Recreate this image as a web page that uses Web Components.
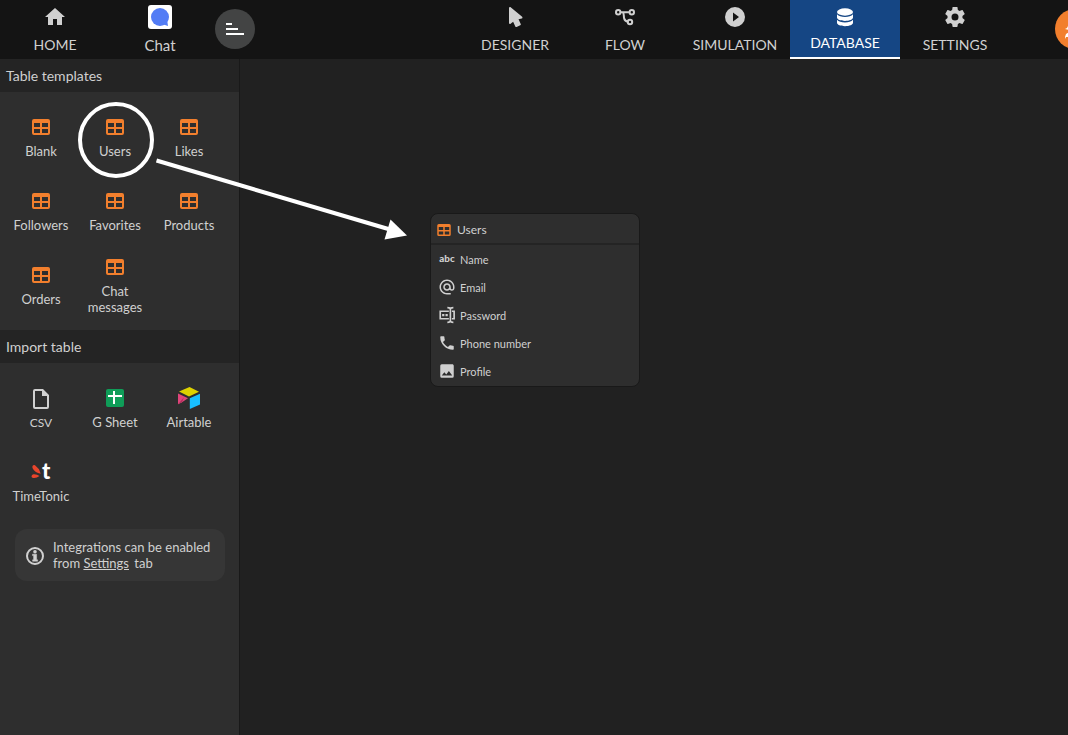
<!DOCTYPE html>
<html lang="en">
<head>
<meta charset="utf-8">
<title>Database</title>
<style>
  html, body { height: 100%; margin: 0; }
  body { background: #212121; color: #d0d0d0; font-family: Lato, sans-serif; font-size: 14px; overflow: hidden; }
</style>
</head>
<body>
<app-shell></app-shell>
<script>
const MDI = {
  home: 'M10,20V14H14V20H19V12H22L12,3L2,12H5V20H10Z',
  cursor: 'M13.64,21.97C13.14,22.21 12.54,22 12.31,21.5L10.13,16.76L7.62,18.78C7.45,18.92 7.24,19 7,19A1,1 0 0,1 6,18V3A1,1 0 0,1 7,2C7.24,2 7.47,2.09 7.64,2.23L7.65,2.22L19.14,11.86C19.57,12.22 19.62,12.85 19.27,13.27C19.12,13.45 18.91,13.57 18.7,13.61L15.54,14.23L17.74,18.96C18,19.46 17.76,20.05 17.26,20.28L13.64,21.97Z',
  play: 'M10,16.5V7.5L16,12M12,2A10,10 0 0,0 2,12A10,10 0 0,0 12,22A10,10 0 0,0 22,12A10,10 0 0,0 12,2Z',
  cog: 'M12,15.5A3.5,3.5 0 0,1 8.5,12A3.5,3.5 0 0,1 12,8.5A3.5,3.5 0 0,1 15.5,12A3.5,3.5 0 0,1 12,15.5M19.43,12.97C19.47,12.65 19.5,12.33 19.5,12C19.5,11.67 19.47,11.34 19.43,11L21.54,9.37C21.73,9.22 21.78,8.95 21.66,8.73L19.66,5.27C19.54,5.05 19.27,4.96 19.05,5.05L16.56,6.05C16.04,5.66 15.5,5.32 14.87,5.07L14.5,2.42C14.46,2.18 14.25,2 14,2H10C9.75,2 9.54,2.18 9.5,2.42L9.13,5.07C8.5,5.32 7.96,5.66 7.44,6.05L4.95,5.05C4.73,4.96 4.46,5.05 4.34,5.27L2.34,8.73C2.21,8.95 2.27,9.22 2.46,9.37L4.57,11C4.53,11.34 4.5,11.67 4.5,12C4.5,12.33 4.53,12.65 4.57,12.97L2.46,14.63C2.27,14.78 2.21,15.05 2.34,15.27L4.34,18.73C4.46,18.95 4.73,19.03 4.95,18.95L7.44,17.94C7.96,18.34 8.5,18.68 9.13,18.93L9.5,21.58C9.54,21.82 9.75,22 10,22H14C14.25,22 14.46,21.82 14.5,21.58L14.87,18.93C15.5,18.67 16.04,18.34 16.56,17.94L19.05,18.95C19.27,19.03 19.54,18.95 19.66,18.73L21.66,15.27C21.78,15.05 21.73,14.78 21.54,14.63L19.43,12.97Z',
  table: 'M5,4H19A2,2 0 0,1 21,6V18A2,2 0 0,1 19,20H5A2,2 0 0,1 3,18V6A2,2 0 0,1 5,4M5,8V12H11V8H5M13,8V12H19V8H13M5,14V18H11V14H5M13,14V18H19V14H13Z',
  file: 'M14,2H6A2,2 0 0,0 4,4V20A2,2 0 0,0 6,22H18A2,2 0 0,0 20,20V8L14,2M18,20H6V4H13V9H18V20Z',
  phone: 'M6.62,10.79C8.06,13.62 10.38,15.94 13.21,17.38L15.41,15.18C15.69,14.9 16.08,14.82 16.43,14.93C17.55,15.3 18.75,15.5 20,15.5A1,1 0 0,1 21,16.5V20A1,1 0 0,1 20,21A17,17 0 0,1 3,4A1,1 0 0,1 4,3H7.5A1,1 0 0,1 8.5,4C8.5,5.25 8.7,6.45 9.07,7.57C9.18,7.92 9.1,8.31 8.82,8.59L6.62,10.79Z',
  image: 'M8.5,13.5L11,16.5L14.5,12L19,18H5M21,19V5C21,3.89 20.1,3 19,3H5A2,2 0 0,0 3,5V19A2,2 0 0,0 5,21H19A2,2 0 0,0 21,19Z',
  at: 'M12,15C12.81,15 13.5,14.7 14.11,14.11C14.7,13.5 15,12.81 15,12C15,11.19 14.7,10.5 14.11,9.89C13.5,9.3 12.81,9 12,9C11.19,9 10.5,9.3 9.89,9.89C9.3,10.5 9,11.19 9,12C9,12.81 9.3,13.5 9.89,14.11C10.5,14.7 11.19,15 12,15M12,2C14.75,2 17.1,3 19.05,4.95C21,6.9 22,9.25 22,12V13.45C22,14.45 21.65,15.3 21,16C20.3,16.67 19.5,17 18.5,17C17.3,17 16.31,16.5 15.56,15.5C14.56,16.5 13.38,17 12,17C10.63,17 9.45,16.5 8.46,15.54C7.5,14.55 7,13.38 7,12C7,10.63 7.5,9.45 8.46,8.46C9.45,7.5 10.63,7 12,7C13.38,7 14.55,7.5 15.54,8.46C16.5,9.45 17,10.63 17,12V13.45C17,13.86 17.16,14.22 17.46,14.53C17.76,14.84 18.11,15 18.5,15C18.92,15 19.27,14.84 19.57,14.53C19.87,14.22 20,13.86 20,13.45V12C20,9.81 19.23,7.93 17.65,6.35C16.07,4.77 14.19,4 12,4C9.81,4 7.93,4.77 6.35,6.35C4.77,7.93 4,9.81 4,12C4,14.19 4.77,16.07 6.35,17.65C7.93,19.23 9.81,20 12,20H17V22H12C9.25,22 6.9,21 4.95,19.05C3,17.1 2,14.75 2,12C2,9.25 3,6.9 4.95,4.95C6.9,3 9.25,2 12,2Z'
};
const DRAWN = {
  chat: '<rect width="24" height="24" rx="3" fill="#fff"/><circle cx="12" cy="12" r="9" fill="#527cf5"/><path d="M14 19l6 2-1-7z" fill="#527cf5"/>',
  flow: '<g fill="none" stroke="currentColor" stroke-width="2"><circle cx="5.2" cy="7.2" r="2.2"/><circle cx="18.8" cy="7.2" r="2.2"/><circle cx="17" cy="17" r="2.2"/><path d="M7.3 7.2h9.4M9.500 7.2c2 1 .9 4 1.700 6.400q.8 2.600 3.600 3.100"/></g>',
  database: '<g fill="currentColor"><ellipse cx="12" cy="7" rx="8" ry="3.700"/><path d="M4 9.300c1.500 1.800 4.600 2.700 8 2.700s6.500-.9 8-2.700v3.200c0 1.900-3.600 3.400-8 3.400s-8-1.500-8-3.400z"/><path d="M4 14.700c1.500 1.800 4.600 2.700 8 2.700s6.500-.9 8-2.700v3.100c0 1.900-3.600 3.400-8 3.400s-8-1.500-8-3.400z"/></g>',
  menu: '<path d="M3 7h6M3 12h12M3 17h18" fill="none" stroke="#fff" stroke-width="2"/>',
  sheet: '<rect x="3" y="3" width="18" height="18" rx="2" fill="#0f9d58"/><path d="M5 10h14M11 5v13" stroke="#fff" stroke-width="2"/>',
  airtable: '<path d="M2 5.500L12.500 1 22 5.700 12 10.600z" fill="#ded200"/><path d="M1 7.500v10.800l4-2 6-4z" fill="#e0457b"/><path d="M1 18.300l4-2 2-5z" fill="#b0305c"/><path d="M12.800 12.200L23 7.800v10.700l-10.200 4.400z" fill="#18bfff"/>',
  timetonic: '<path d="M3.500 6q1-1.500 2.500-.8l4 4 1.700 4.600Q6 12.500 4 9 3 7.500 3.500 6z" fill="#e8452c"/><path d="M2.500 16.500q0-2 2-2.300 3.500-.2 6 1.800-3.500 2.500-7 1.700-1-.2-1-1.200z" fill="#e8452c"/><text x="13" y="19" font-family="Lato, sans-serif" font-weight="900" font-size="22" fill="#fff">t</text>',
  info: '<circle cx="12" cy="13" r="8" fill="none" stroke="currentColor" stroke-width="2"/><path d="M9.500 11.200h4.100v5.600h1v1.400h-5v-1.400h1v-4.200H9.500z" fill="currentColor" stroke="currentColor" stroke-width=".5"/><circle cx="12" cy="8.800" r="1.800" fill="currentColor"/>',
  abc: '<text x="12" y="16" text-anchor="middle" font-family="Lato, sans-serif" font-weight="900" font-size="13" fill="currentColor">abc</text>',
  password: '<g fill="none" stroke="currentColor" stroke-width="2.200"><path d="M14.500 7H3v10h11.500M18.500 7h3v10h-3M12.500 2.200q4 0 4 2v15.600q0 2-4 2M20.500 2.200q-4 0-4 2M20.500 21.800q-4 0-4-2"/></g><path d="M5.500 10.500h3v3h-3zM10 10.500h3v3h-3z" fill="currentColor"/>',
  rocket: '<path d="M2 12l2-1 2-4 8-4 6-1-1 7-6 8-3 3-1-5-3-2zM2 20l1-3 3-2 2 2-2 3-3 0-1 2z" fill="#fff"/>'
};
function define(name, render) {
  customElements.define(name, class extends HTMLElement {
    constructor() { super(); this.attachShadow({ mode: 'open' }); }
    connectedCallback() { this.shadowRoot.innerHTML = render(this); }
  });
}

define('app-icon', el => {
  const n = el.getAttribute('name');
  const body = MDI[n] ? `<path fill="currentColor" fill-rule="evenodd" d="${MDI[n]}"/>` : DRAWN[n];
  return `<style>:host{display:block;flex:none;width:24px;height:24px}svg{display:block;width:100%;height:100%;overflow:visible}</style>
  <svg viewBox="0 0 24 24" aria-hidden="true">${body}</svg>`;
});

define('nav-item', el => `<style>
  :host{display:block;flex:none;width:110px;font-size:14px}
  a{box-sizing:border-box;height:59px;display:flex;flex-direction:column;align-items:center;padding-top:5px;gap:6px;color:#d0d0d0;text-decoration:none;line-height:20px;white-space:nowrap}
  :host([active]) a{background:#154684;border-bottom:2px solid #fff;color:#fff;gap:4px}
  </style><a href="#"><app-icon name="${el.getAttribute('icon')}"></app-icon><slot></slot></a>`);

define('top-bar', () => `<style>
  :host{display:block;background:#141414;overflow:hidden}
  header,nav{display:flex}
  header{align-items:flex-start;height:59px}
  .left{flex:none;width:460px;display:flex}
  .chat{width:100px;font-size:15px}
  button{flex:none;width:40px;height:40px;margin:9px 0 0 5px;padding:0;border:0;border-radius:50%;display:grid;place-items:center;background:#434444}
  .user{margin-left:45px;background:#f27f2d}
  </style>
  <header><div class="left"><nav-item icon="home">HOME</nav-item><nav-item class="chat" icon="chat">Chat</nav-item>
  <button aria-label="Menu"><app-icon name="menu"></app-icon></button></div>
  <nav><nav-item icon="cursor">DESIGNER</nav-item><nav-item icon="flow">FLOW</nav-item><nav-item icon="play">SIMULATION</nav-item><nav-item icon="database" active>DATABASE</nav-item><nav-item icon="cog">SETTINGS</nav-item></nav>
  <button class="user" aria-label="Account"><app-icon name="rocket"></app-icon></button></header>`);

define('side-section', el => `<style>
  :host{display:block}
  h2{margin:0;padding:0 6px;background:#242424;font-size:14px;font-weight:400;line-height:33px}
  div{display:grid;grid-template-columns:repeat(3,74px);grid-auto-rows:74px;padding:8px 4px}
  </style><h2>${el.getAttribute('heading')}</h2><div><slot></slot></div>`);

define('side-tile', el => `<style>
  :host{display:grid}
  button{border:0;padding:0;background:none;color:#d0d0d0;font:13px/16px Lato,sans-serif;display:flex;flex-direction:column;align-items:center;justify-content:center;gap:4px}
  app-icon{color:${el.getAttribute('icon') === 'table' ? '#f27f2d' : '#d0d0d0'}}
  :host([small]) button{font-size:12px;padding-top:2px}
  </style><button><app-icon name="${el.getAttribute('icon')}"></app-icon><span><slot></slot></span></button>`);

define('info-note', () => `<style>
  :host{display:flex;align-items:center;gap:6px;margin:2px 14px 0 15px;padding:10px 8px;border-radius:12px;background:#363636;font-size:13px;line-height:16px}
  p{margin:0}
  </style><app-icon name="info"></app-icon><p><slot></slot></p>`);

define('side-bar', () => `<style>
  :host{display:block;flex:none;box-sizing:border-box;width:240px;background:#2e2e2e;border-right:1px solid #191919}
  a{color:inherit;margin-right:2px}
  </style>
  <side-section heading="Table templates">
  ${['Blank','Users','Likes','Followers','Favorites','Products','Orders','Chat messages'].map(t => `<side-tile icon="table">${t}</side-tile>`).join('')}
  </side-section>
  <side-section heading="Import table">
  <side-tile icon="file" small>CSV</side-tile><side-tile icon="sheet">G Sheet</side-tile><side-tile icon="airtable">Airtable</side-tile><side-tile icon="timetonic">TimeTonic</side-tile>
  </side-section>
  <info-note>Integrations can be enabled<br>from <a href="#">Settings</a> tab</info-note>`);

define('field-row', el => `<style>
  :host{display:flex;align-items:center;gap:4px;height:28px;padding:0 7px}
  app-icon{width:18px;height:18px}
  </style><app-icon name="${el.getAttribute('icon')}"></app-icon><slot></slot>`);

define('table-card', el => `<style>
  :host{display:block;width:210px;box-sizing:border-box;padding-bottom:1px;border:1px solid #191919;border-radius:8px;background:#2e2e2e;font-size:11px}
  h3{box-sizing:border-box;margin:0;height:31px;display:flex;align-items:center;gap:4px;padding:2px 4px 0;border-bottom:2px solid #242424;font-size:12px;font-weight:400}
  h3 app-icon{width:18px;height:18px;color:#f27f2d}
  </style><h3><app-icon name="table"></app-icon>${el.getAttribute('heading')}</h3><slot></slot>`);

define('hint-arrow', () => `<style>
  :host{position:absolute;left:76px;top:100px;pointer-events:none}
  svg{display:block}
  </style><svg width="334" height="142" viewBox="76 100 334 142" aria-hidden="true"><circle cx="116" cy="140" r="36" fill="none" stroke="#fff" stroke-width="4"/><path d="M156.500 160.500L390 229.500" stroke="#fff" stroke-width="4"/><path d="M407 235.500L390.500 219.500 384.500 239.500z" fill="#fff"/></svg>`);

define('app-shell', () => `<style>
  :host{display:flex;flex-direction:column;min-height:100vh;position:relative}
  main{flex:1;display:flex}
  .canvas{flex:1;position:relative}
  table-card{position:absolute;left:190px;top:154px}
  </style><top-bar></top-bar>
  <main><side-bar></side-bar><div class="canvas"><table-card heading="Users">
  <field-row icon="abc">Name</field-row><field-row icon="at">Email</field-row><field-row icon="password">Password</field-row><field-row icon="phone">Phone number</field-row><field-row icon="image">Profile</field-row>
  </table-card></div></main><hint-arrow></hint-arrow>`);
</script>
</body>
</html>
